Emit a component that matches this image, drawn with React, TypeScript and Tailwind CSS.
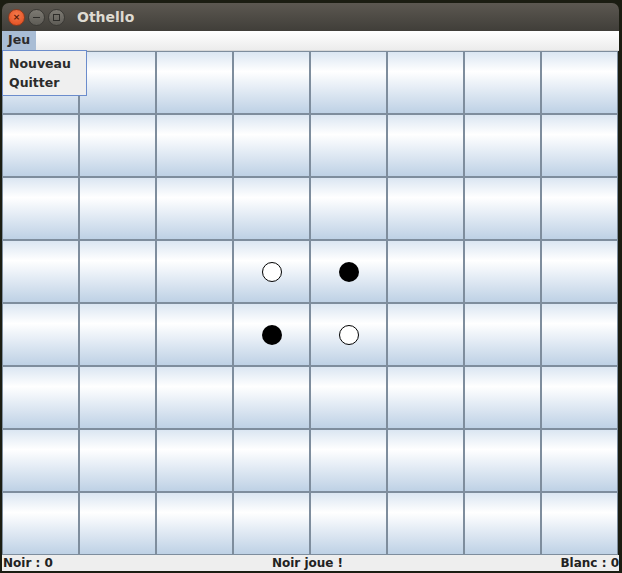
import React from "react";

const font = { fontFamily: '"DejaVu Sans", "Liberation Sans", sans-serif' };

type Piece = "white" | "black" | null;

function initialBoard(): Piece[][] {
  const b: Piece[][] = Array.from({ length: 8 }, () => Array(8).fill(null));
  b[3][3] = "white";
  b[3][4] = "black";
  b[4][3] = "black";
  b[4][4] = "white";
  return b;
}

function Cell({ piece }: { piece: Piece }) {
  return (
    <div className="flex items-center justify-center border border-[#7e8d9d] bg-[linear-gradient(to_bottom,#dbe6f2_0%,#ffffff_32%,#e4ecf5_60%,#bed1e5_100%)]">
      {piece === "white" && (
        <div className="h-[20px] w-[20px] rounded-full border border-black bg-white" />
      )}
      {piece === "black" && <div className="h-[20px] w-[20px] rounded-full bg-black" />}
    </div>
  );
}

export default function App() {
  const board = initialBoard();

  return (
    <div className="h-[573px] w-[622px] overflow-hidden bg-[#1b1d12] pl-[2px] pt-[3px]" style={font}>
      <div className="relative flex w-[617px] flex-col overflow-hidden rounded-t-[7px]">
        {/* title bar */}
        <div className="flex h-[28px] items-center bg-[linear-gradient(to_bottom,#5c5851,#403e39)] pl-[6px]">
          <div className="flex gap-[3px]">
            <div className="flex h-[17px] w-[17px] items-center justify-center rounded-full border border-[#8a3a1e] bg-[radial-gradient(circle_at_50%_35%,#f57a4c,#e0491b)] text-[9px] font-bold leading-none text-[#5a1c08]">
              ×
            </div>
            <div className="flex h-[17px] w-[17px] items-center justify-center rounded-full border border-[#3a3935] bg-[linear-gradient(to_bottom,#7d7a73,#5e5c56)]">
              <div className="h-[1px] w-[7px] bg-[#2e2d2a]" />
            </div>
            <div className="flex h-[17px] w-[17px] items-center justify-center rounded-full border border-[#3a3935] bg-[linear-gradient(to_bottom,#7d7a73,#5e5c56)]">
              <div className="h-[7px] w-[7px] border border-[#2e2d2a]" />
            </div>
          </div>
          <span className="ml-[12px] text-[14px] font-bold text-[#dfdbd2]">Othello</span>
        </div>

        {/* menu bar */}
        <div className="flex h-[20px] bg-[linear-gradient(to_bottom,#ffffff,#ececec)] border-b border-[#d8d8d8]">
          <div className="flex h-full items-center bg-[#a9bdd5] px-[6px] text-[12.5px] font-bold text-[#2b2b2b]">
            Jeu
          </div>
        </div>

        {/* board */}
        <div className="grid grid-cols-[repeat(8,77px)] grid-rows-[repeat(8,63px)]">
          {board.map((row, r) =>
            row.map((p, c) => <Cell key={`${r}-${c}`} piece={p} />)
          )}
        </div>

        {/* status bar */}
        <div className="flex h-[16px] items-center justify-between bg-[#eeeeee] text-[12px] font-bold leading-none text-[#222222]">
          <span className="w-[120px] pl-[1px]">Noir : 0</span>
          <span className="mr-[6px]">Noir joue !</span>
          <span className="w-[120px] text-right">Blanc : 0</span>
        </div>

        {/* open menu */}
        <div className="absolute left-0 top-[47px] flex w-[85px] flex-col border border-[#6b8ccc] bg-[#efefef] py-[3px] pl-[6px] text-[12.5px] font-bold text-[#2b2b2b]">
          <span className="h-[19px] leading-[19px]">Nouveau</span>
          <span className="h-[19px] leading-[19px]">Quitter</span>
        </div>
      </div>
    </div>
  );
}
